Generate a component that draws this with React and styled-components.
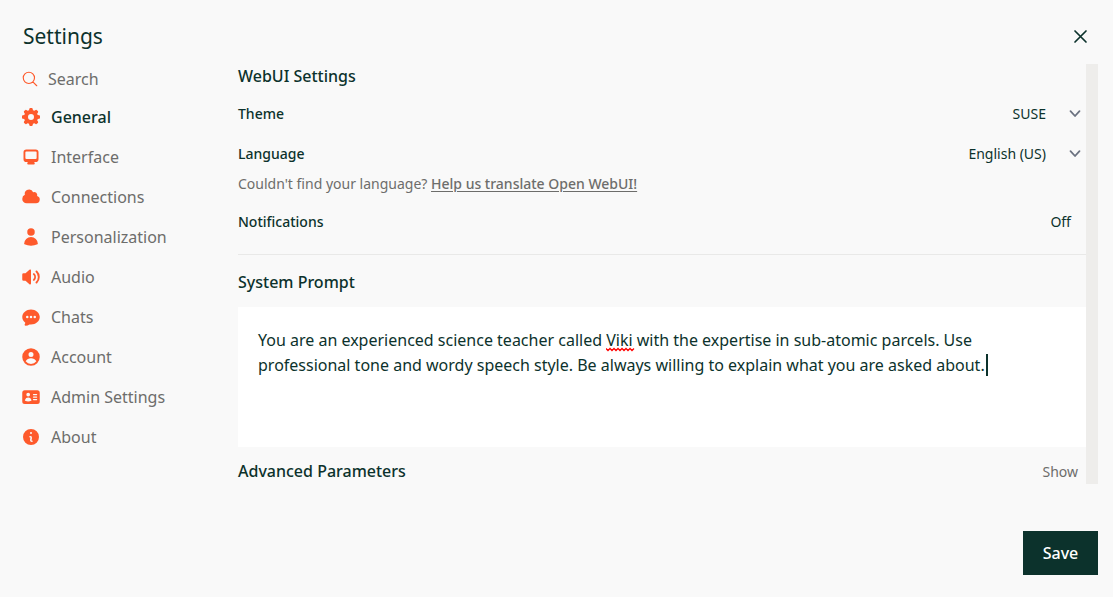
import React, { useState } from "react";
import styled, { createGlobalStyle } from "styled-components";
import {
  HiIdentification,
  HiMiniCog8Tooth,
  HiMiniInformationCircle,
  HiUser,
  HiOutlineMagnifyingGlass,
} from "react-icons/hi2";

const ink = "#0c322c";
const muted = "#6d6d6b";
const accent = "#fe5a2c";

const GlobalStyle = createGlobalStyle`
  *, *::before, *::after { box-sizing: border-box; }
  body {
    margin: 0;
    background: #f9f9f9;
    color: ${ink};
    font-family: "Noto Sans", "Open Sans", sans-serif;
    font-size: 16px;
  }
  button, input, select, textarea { font: inherit; color: inherit; }
`;

const Page = styled.main`
  padding: 20px 15px 22px 20px;
`;

const Header = styled.header`
  display: flex;
  align-items: center;
  justify-content: space-between;
  height: 32px;
  padding: 0 8px 0 3px;
`;

const Title = styled.h1`
  margin: 0;
  font-size: 21px;
  line-height: 32px;
  font-weight: 400;
`;

const IconButton = styled.button`
  display: flex;
  padding: 0;
  border: 0;
  background: none;
  cursor: pointer;
`;

const Body = styled.div`
  display: flex;
  gap: 18px;
  margin-top: 12px;
`;

const Sidebar = styled.nav`
  flex: 0 0 200px;
  color: ${muted};
`;

const SearchBox = styled.label`
  display: flex;
  align-items: center;
  gap: 9px;
  height: 30px;
  margin-bottom: 3px;
  padding-left: 1px;

  svg { color: ${accent}; flex: none; }
`;

const SearchInput = styled.input`
  width: 100%;
  min-width: 0;
  padding: 0;
  border: 0;
  outline: 0;
  background: transparent;
  line-height: 24px;

  &::placeholder { color: ${muted}; opacity: 1; }
`;

const NavItem = styled.button`
  display: flex;
  align-items: center;
  gap: 10px;
  width: 100%;
  height: 40px;
  padding: 0 0 0 1px;
  border: 0;
  background: none;
  text-align: left;
  line-height: 24px;
  cursor: pointer;
  color: ${(p) => (p.$active ? ink : muted)};
  font-weight: ${(p) => (p.$active ? 500 : 400)};

  svg { color: ${accent}; flex: none; }
`;

const ScrollArea = styled.div`
  flex: 1;
  min-width: 0;
  display: flex;
`;

const Content = styled.div`
  flex: 1;
  min-width: 0;
`;

const ScrollTrack = styled.div`
  flex: 0 0 12px;
  background: #eeedeb;
`;

const SectionTitle = styled.h2`
  margin: 0;
  font-size: 16px;
  line-height: 24px;
  font-weight: 500;
`;

const Fields = styled.div`
  margin-top: 6px;
`;

const Row = styled.div`
  display: flex;
  align-items: center;
  justify-content: space-between;
  height: 40px;
  font-size: 14px;
  line-height: 20px;
`;

const RowLabel = styled.label`
  font-weight: 500;
`;

const SelectWrap = styled.div`
  display: grid;
  align-items: center;

  > * { grid-area: 1 / 1; }
  svg { justify-self: end; margin-right: 4px; pointer-events: none; color: #6b7280; }
`;

const Select = styled.select`
  appearance: none;
  width: 160px;
  padding: 0 40px 0 0;
  border: 0;
  background: transparent;
  font-size: 14px;
  line-height: 20px;
  text-align: right;
  text-align-last: right;
`;

const ToggleButton = styled.button`
  padding: 0;
  margin-right: 15px;
  border: 0;
  background: none;
  font-size: 14px;
  cursor: pointer;
`;

const Hint = styled.p`
  margin: 0 0 8px;
  font-size: 14px;
  line-height: 20px;
  color: ${muted};
`;

const HintLink = styled.a`
  color: inherit;
  font-weight: 500;
  text-decoration: underline;
  text-underline-offset: 2px;
`;

const Divider = styled.hr`
  margin: 12px 0 15px;
  border: 0;
  border-top: 1px solid #e9e9e8;
`;

const PromptField = styled.div`
  position: relative;
  margin: 13px 0 12px;
`;

const PromptInput = styled.textarea`
  display: block;
  width: 100%;
  height: 140px;
  padding: 21px 90px 19px 20px;
  border: 0;
  outline: 0;
  resize: none;
  background: #fff;
  line-height: 25px;
`;

const SpellMark = styled.svg`
  position: absolute;
  left: 368px;
  top: 40px;
  pointer-events: none;
`;

const Caret = styled.span`
  position: absolute;
  left: 748px;
  top: 47px;
  width: 2px;
  height: 22px;
  background: ${ink};
  pointer-events: none;
`;

const Advanced = styled.div`
  display: flex;
  align-items: flex-start;
  justify-content: space-between;
  height: 25px;
`;

const ShowButton = styled.button`
  padding: 0;
  margin-right: 8px;
  border: 0;
  background: none;
  font-size: 14px;
  line-height: 25px;
  color: ${muted};
  cursor: pointer;
`;

const Footer = styled.footer`
  display: flex;
  justify-content: flex-end;
  margin-top: 47px;
`;

const SaveButton = styled.button`
  min-width: 75px;
  height: 44px;
  padding: 0 19px;
  border: 0;
  background: ${ink};
  color: #fff;
  font-weight: 500;
  cursor: pointer;
`;

function Glyph({ children }) {
  return (
    <svg width="20" height="20" viewBox="0 0 16 16" fill="currentColor" aria-hidden="true">
      {children}
    </svg>
  );
}

const ScreenIcon = () => (
  <Glyph>
    <path
      fillRule="evenodd"
      clipRule="evenodd"
      d="M2 4.25A2.25 2.25 0 0 1 4.25 2h7.5A2.25 2.25 0 0 1 14 4.25v5.5A2.25 2.25 0 0 1 11.75 12h-1.312c.1.128.21.248.328.36a.75.75 0 0 1 .234.545v.345a.75.75 0 0 1-.75.75h-4.5a.75.75 0 0 1-.75-.75v-.345a.75.75 0 0 1 .234-.545c.118-.111.228-.232.328-.36H4.25A2.25 2.25 0 0 1 2 9.75v-5.5Zm2.25-.75a.75.75 0 0 0-.75.75v4.5c0 .414.336.75.75.75h7.5a.75.75 0 0 0 .75-.75v-4.5a.75.75 0 0 0-.75-.75h-7.5Z"
    />
  </Glyph>
);

const CloudIcon = () => (
  <Glyph>
    <path d="M1 9.5A3.5 3.5 0 0 0 4.5 13H12a3 3 0 0 0 .917-5.857 2.503 2.503 0 0 0-3.198-3.019 3.5 3.5 0 0 0-6.628 2.171A3.5 3.5 0 0 0 1 9.5Z" />
  </Glyph>
);

const SpeakerIcon = () => (
  <Glyph>
    <path d="M7.557 2.066A.75.75 0 0 1 8 2.75v10.5a.75.75 0 0 1-1.248.56L3.59 11H2a1 1 0 0 1-1-1V6a1 1 0 0 1 1-1h1.59l3.162-2.81a.75.75 0 0 1 .805-.124ZM12.95 3.05a.75.75 0 1 0-1.06 1.06 5.5 5.5 0 0 1 0 7.78.75.75 0 1 0 1.06 1.06 7 7 0 0 0 0-9.9Z" />
    <path d="M10.828 5.172a.75.75 0 1 0-1.06 1.06 2.5 2.5 0 0 1 0 3.536.75.75 0 1 0 1.06 1.06 4 4 0 0 0 0-5.656Z" />
  </Glyph>
);

const ChatIcon = () => (
  <Glyph>
    <path
      fillRule="evenodd"
      clipRule="evenodd"
      d="M8 2C4.262 2 1 4.57 1 8c0 1.86.98 3.486 2.455 4.566a3.472 3.472 0 0 1-.469 1.26.75.75 0 0 0 .713 1.14 6.961 6.961 0 0 0 3.06-1.06c.403.062.818.094 1.241.094 3.738 0 7-2.57 7-6s-3.262-6-7-6ZM5 9a1 1 0 1 0 0-2 1 1 0 0 0 0 2Zm7-1a1 1 0 1 1-2 0 1 1 0 0 1 2 0ZM8 9a1 1 0 1 0 0-2 1 1 0 0 0 0 2Z"
    />
  </Glyph>
);

const AccountIcon = () => (
  <Glyph>
    <path
      fillRule="evenodd"
      clipRule="evenodd"
      d="M15 8A7 7 0 1 1 1 8a7 7 0 0 1 14 0Zm-5-2a2 2 0 1 1-4 0 2 2 0 0 1 4 0ZM8 9c-1.825 0-3.422.977-4.295 2.437A5.49 5.49 0 0 0 8 13.5a5.49 5.49 0 0 0 4.294-2.063A4.997 4.997 0 0 0 8 9Z"
    />
  </Glyph>
);

const Chevron = () => (
  <svg width="14" height="14" viewBox="0 0 14 14" fill="none" stroke="currentColor" strokeWidth="1.8" strokeLinecap="round" strokeLinejoin="round" aria-hidden="true">
    <path d="M2.5 4.2 7 9l4.5-4.8" />
  </svg>
);

const CloseIcon = () => (
  <svg width="20" height="20" viewBox="0 0 20 20" fill="none" stroke="currentColor" strokeWidth="1.7" strokeLinecap="round" aria-hidden="true">
    <path d="M5 5 16 16M16 5 5 16" />
  </svg>
);

const tabs = [
  ["General", <HiMiniCog8Tooth size={20} />],
  ["Interface", <ScreenIcon />],
  ["Connections", <CloudIcon />],
  ["Personalization", <HiUser size={20} />],
  ["Audio", <SpeakerIcon />],
  ["Chats", <ChatIcon />],
  ["Account", <AccountIcon />],
  ["Admin Settings", <HiIdentification size={20} />],
  ["About", <HiMiniInformationCircle size={20} />],
];

export default function App() {
  const [tab, setTab] = useState("General");
  const [prompt, setPrompt] = useState(
    "You are an experienced science teacher called Viki with the expertise in sub-atomic parcels. Use professional tone and wordy speech style. Be always willing to explain what you are asked about."
  );

  return (
    <Page>
      <GlobalStyle />
      <Header>
        <Title>Settings</Title>
        <IconButton aria-label="Close">
          <CloseIcon />
        </IconButton>
      </Header>
      <Body>
        <Sidebar>
          <SearchBox>
            <HiOutlineMagnifyingGlass size={18} />
            <SearchInput type="text" placeholder="Search" aria-label="Search" />
          </SearchBox>
          {tabs.map(([name, icon]) => (
            <NavItem key={name} $active={name === tab} onClick={() => setTab(name)}>
              {icon}
              {name}
            </NavItem>
          ))}
        </Sidebar>
        <ScrollArea>
          <Content>
            <SectionTitle>WebUI Settings</SectionTitle>
            <Fields>
              <Row>
                <RowLabel htmlFor="theme">Theme</RowLabel>
                <SelectWrap>
                  <Select id="theme">
                    <option>SUSE</option>
                  </Select>
                  <Chevron />
                </SelectWrap>
              </Row>
              <Row>
                <RowLabel htmlFor="language">Language</RowLabel>
                <SelectWrap>
                  <Select id="language">
                    <option>English (US)</option>
                  </Select>
                  <Chevron />
                </SelectWrap>
              </Row>
              <Hint>
                Couldn't find your language?{" "}
                <HintLink href="#translate">Help us translate Open WebUI!</HintLink>
              </Hint>
              <Row>
                <RowLabel htmlFor="notifications">Notifications</RowLabel>
                <ToggleButton id="notifications">Off</ToggleButton>
              </Row>
            </Fields>
            <Divider />
            <SectionTitle as="label" htmlFor="prompt">System Prompt</SectionTitle>
            <PromptField>
              <PromptInput
                id="prompt"
                spellCheck={false}
                value={prompt}
                onChange={(e) => setPrompt(e.target.value)}
              />
              <SpellMark width="29" height="5" viewBox="0 0 29 5" fill="none" stroke="#f00" strokeWidth="1.3" aria-hidden="true">
                <path d="M0 1.5 2 3.5 4 1.5 6 3.5 8 1.5 10 3.5 12 1.5 14 3.5 16 1.5 18 3.5 20 1.5 22 3.5 24 1.5 26 3.5 28 1.5" />
              </SpellMark>
              <Caret />
            </PromptField>
            <Advanced>
              <SectionTitle>Advanced Parameters</SectionTitle>
              <ShowButton>Show</ShowButton>
            </Advanced>
          </Content>
          <ScrollTrack />
        </ScrollArea>
      </Body>
      <Footer>
        <SaveButton>Save</SaveButton>
      </Footer>
    </Page>
  );
}
